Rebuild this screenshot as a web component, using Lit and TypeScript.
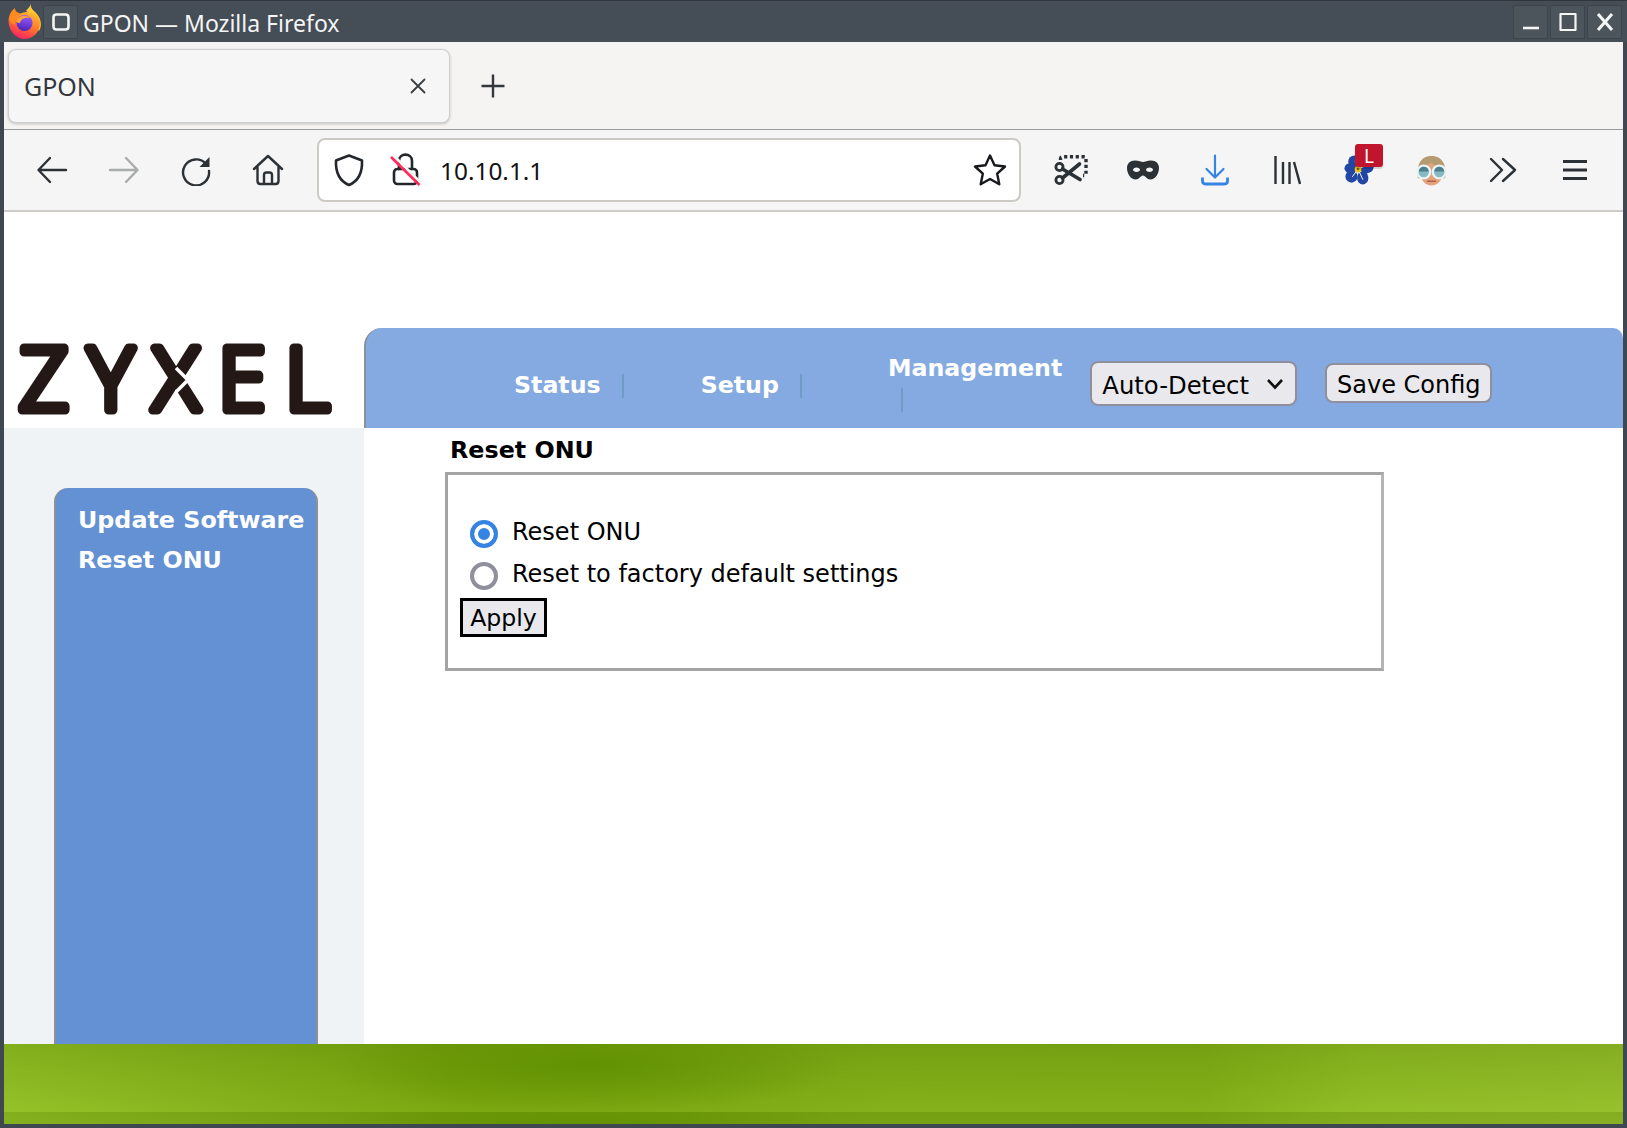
import { LitElement, html, css, svg } from "lit";
import { customElement } from "lit/decorators.js";

const ico = (w: number, h: number, vb: string, body: unknown) =>
  html`<svg width=${w} height=${h} viewBox=${vb} fill="none" stroke-linecap="round" stroke-linejoin="round">${body}</svg>`;

const firefox = ico(36, 36, "0 0 36 36", svg`
  <defs>
    <linearGradient id="ffa" x1="0.75" y1="0" x2="0.25" y2="1"><stop offset="0" stop-color="#ffbd2e"/><stop offset=".45" stop-color="#ff7a2a"/><stop offset=".8" stop-color="#ff3b50"/><stop offset="1" stop-color="#f0157c"/></linearGradient>
    <linearGradient id="ffb" x1="0.6" y1="0" x2="0.4" y2="1"><stop offset="0" stop-color="#9b5cff"/><stop offset="1" stop-color="#4a25b8"/></linearGradient>
  </defs>
  <path d="M25 0C24 6 30 7 33 13C36 19 35 24 33 27L24 17C26 13 23 8 20 7C21 5 24 3 25 0Z" fill="#ffc93a"/>
  <path d="M2.5 15C2 27 10 35 18.5 35C27 35 34 28 34 19C34 15 30 9 27 8C30 14 27 7 20 8C13 9 8 13 7 15C5 14 3 13 2.5 15Z" fill="url(#ffa)"/>
  <path d="M3 13C4 9 6 6 9 4C9 7 11 9 15 9C11 11 9 15 9 20C6 21 4 18 3 13Z" fill="#ff8a1f"/>
  <circle cx="18.5" cy="19" r="8" fill="url(#ffb)"/>
  <path d="M10 17C12 12 19 10 25 14C20 13 15 14 14 19C12 19 10 18 10 17Z" fill="#ffa230"/>
`);
const winMenu = ico(20, 20, "0 0 20 20", svg`<path d="M5.5 2.5H14.5Q17.5 2.5 17.5 5.5V14.5Q17.5 17.5 14.5 17.5H5.5Q2.5 17.5 2.5 14.5V5.5Q2.5 2.5 5.5 2.5Z" stroke="#f4f5f5" stroke-width="2.6"/>`);
const winMin = ico(16, 16, "0 0 16 16", svg`<path d="M0 14H16" stroke="#f4f5f5" stroke-width="2.6" stroke-linecap="butt"/>`);
const winMax = ico(18, 20, "0 0 18 20", svg`<rect x="1.5" y="2" width="15" height="16" stroke="#f4f5f5" stroke-width="2.2"/>`);
const winClose = ico(20, 20, "0 0 20 20", svg`<path d="M3 2L17 18M17 2L3 18" stroke="#f4f5f5" stroke-width="3" stroke-linecap="butt"/>`);
const tabX = ico(18, 18, "0 0 18 18", svg`<path d="M2.5 2.5L15.5 15.5M15.5 2.5L2.5 15.5" stroke="#3a3d42" stroke-width="1.8"/>`);
const plus = ico(26, 26, "0 0 26 26", svg`<path d="M13 1.5V24.5M1.5 13H24.5" stroke="#33373c" stroke-width="2.4" stroke-linecap="butt"/>`);
const back = ico(32, 30, "0 0 32 30", svg`<path d="M30 15H3M14 3L2.5 15L14 27" stroke="#2c3136" stroke-width="2.4"/>`);
const forward = ico(32, 30, "0 0 32 30", svg`<path d="M2 15H29M18 3L29.5 15L18 27" stroke="#a9abad" stroke-width="2.4"/>`);
const reload = ico(32, 32, "0 0 32 32", svg`<path d="M26 10A13 13 0 1 0 29 17" stroke="#2c3136" stroke-width="2.4"/><path d="M29.5 3V13H19.5Z" fill="#2c3136"/>`);
const home = ico(32, 32, "0 0 32 32", svg`<path d="M2 15L16 2L30 15M5.5 13V27Q5.5 30 8.5 30H23.5Q26.5 30 26.5 27V13M12 30V21Q12 18.5 14.5 18.5H17.5Q20 18.5 20 21V30" stroke="#2c3136" stroke-width="2.4"/>`);
const shield = ico(34, 34, "0 0 34 34", svg`<path d="M17 2.5L30 7.5C30.5 19 26.5 28 17 32C7.5 28 3.5 19 4 7.5Z" stroke="#23272b" stroke-width="2.6"/>`);
const lock = ico(34, 36, "0 0 34 36", svg`
  <path d="M11 17V9C11 0.5 24 0.5 24 9V17" stroke="#23272b" stroke-width="2.6"/>
  <rect x="6" y="17" width="23" height="15" rx="3.5" stroke="#23272b" stroke-width="2.6"/>
  <path d="M5 3L34 32" stroke="#f5f5f5" stroke-width="3" stroke-linecap="butt"/>
  <path d="M3 5L31.5 33" stroke="#ff2a5c" stroke-width="2.6" stroke-linecap="butt"/>`);
const star = ico(34, 34, "0 0 34 34", svg`<path d="M17 2.5L21.5 12.2L32 13.5L24.2 20.7L26.3 31.3L17 26L7.7 31.3L9.8 20.7L2 13.5L12.5 12.2Z" stroke="#17191c" stroke-width="2.4"/>`);
const scissors = ico(34, 30, "0 0 34 30", svg`
  <path d="M6.5 5V3.5Q6.5 1.8 8.2 1.8H30.5Q32 1.8 32 3.5V19Q32 20.5 30.5 20.5H29" stroke="#2c3136" stroke-width="3.4" stroke-dasharray="3.2 2.6" stroke-linecap="butt"/>
  <circle cx="5.5" cy="12" r="3.6" stroke="#2c3136" stroke-width="2.8"/><circle cx="5.5" cy="25" r="3.6" stroke="#2c3136" stroke-width="2.8"/>
  <path d="M8.5 14L26 24.5M8.5 23L25.5 9" stroke="#2c3136" stroke-width="3.6"/>`);
const mask = ico(34, 20, "0 0 34 20", svg`
  <path fill-rule="evenodd" d="M9 0.5C13 0.5 15 2 17 2C19 2 21 0.5 25 0.5C30 0.5 33 3.5 33 8C33 14 29 19.5 24.5 19.5C20.5 19.5 19.5 15.5 17 15.5C14.5 15.5 13.5 19.5 9.5 19.5C5 19.5 1 14 1 8C1 3.5 4 0.5 9 0.5ZM10.5 7.5C8.5 7.5 7 8.5 7 9.8C7 11 8.5 12 10.5 12C12.5 12 14 11 14 9.8C14 8.5 12.5 7.5 10.5 7.5ZM23.5 7.5C21.5 7.5 20 8.5 20 9.8C20 11 21.5 12 23.5 12C25.5 12 27 11 27 9.8C27 8.5 25.5 7.5 23.5 7.5Z" fill="#2c3136"/>`);
const download = ico(28, 32, "0 0 28 32", svg`<path d="M14 1.5V23M5.5 15L14 23.5L22.5 15" stroke="#3584e4" stroke-width="2.2"/><path d="M1.5 23.5V27Q1.5 30 4.5 30H23.5Q26.5 30 26.5 27V23.5" stroke="#3584e4" stroke-width="2.8" stroke-linecap="butt"/>`);
const library = ico(28, 30, "0 0 28 30", svg`<path d="M2.5 1V29M10 7V29M16.5 7V29M21 7L27 29" stroke="#2c3136" stroke-width="2.4" stroke-linecap="butt"/>`);
const flower = ico(30, 30, "0 0 32 32", svg`
  <g fill="#2146a3"><ellipse cx="11" cy="7" rx="6.5" ry="6.5"/><ellipse cx="24" cy="13" rx="7.5" ry="6.5"/><ellipse cx="20" cy="24.5" rx="6" ry="7"/><ellipse cx="8" cy="23" rx="6.5" ry="6.5"/><ellipse cx="7" cy="14" rx="6.5" ry="5.5"/></g>
  <path d="M15 15L12 7M15 15L24 11M15 15L20 26M15 15L9 23" stroke="#fff" stroke-width="1"/>
  <circle cx="15" cy="15" r="3.6" fill="#efc00f"/><circle cx="15" cy="15" r="1.3" fill="#6c5a00"/>`);
const avatar = ico(33, 31, "0 0 34 32", svg`
  <path d="M3 24C1 12 5 1 17 1C29 1 33 12 31 24Z" fill="#b59a72"/>
  <path d="M5 17C10 13 13 9 17 8C21 11 25 14 29 17C29 26 23 31.5 17 31.5C11 31.5 5 26 5 17Z" fill="#e3a27c"/>
  <circle cx="9" cy="17.5" r="6.6" fill="#86b9c4" stroke="#eaf4f5" stroke-width="2.4"/><circle cx="25" cy="17.5" r="6.6" fill="#86b9c4" stroke="#eaf4f5" stroke-width="2.4"/>
  <path d="M4 17A5 5 0 0 1 14 17ZM20 17A5 5 0 0 1 30 17Z" fill="#4d7f8c"/>
  <path d="M13 27H21" stroke="#b5614a" stroke-width="1.6"/>`);
const chevrons = ico(28, 26, "0 0 28 26", svg`<path d="M2 2L13 13L2 24M14 2L26 13L14 24" stroke="#2c3136" stroke-width="2.4"/>`);
const menu = ico(26, 22, "0 0 26 22", svg`<path d="M1 2.5H25M1 11H25M1 19.5H25" stroke="#2c3136" stroke-width="2.8" stroke-linecap="butt"/>`);

@customElement("app-root")
export class AppRoot extends LitElement {
  static styles = css`
    :host { display: flex; flex-direction: column; width: 1627px; height: 1128px; box-sizing: border-box; background: #3f4850; padding: 0 4px 4px; overflow: hidden; font-family: "DejaVu Sans", sans-serif; }
    .titlebar { height: 42px; margin: 0 -4px; background: #454d56; border-top: 1px solid #2f353b; box-sizing: border-box; display: flex; align-items: center; padding: 0 5px 0 6px; color: #f4f5f5; font: 400 23px "Noto Sans", sans-serif; }
    .ffx { width: 36px; height: 36px; margin-right: 1px; }
    .wbtn { width: 35px; height: 34px; box-sizing: border-box; display: flex; align-items: center; justify-content: center; background: #4c555c; border: 1px solid #3c444c; border-radius: 2px; }
    .title { margin-left: 5px; flex: 1; white-space: nowrap; padding-top: 2px; }
    .wbtns { display: flex; gap: 2px; }
    .tabbar { height: 88px; box-sizing: border-box; background: #f5f4f3; border-bottom: 1px solid #98999b; display: flex; align-items: center; padding: 1px 0 0 4px; }
    .tab { width: 442px; height: 74px; box-sizing: border-box; background: #f6f6f6; border: 1px solid #cfcfcf; border-radius: 8px; box-shadow: 0 1px 3px rgba(0,0,0,.22); display: flex; align-items: center; justify-content: space-between; padding: 0 22px 0 15px; color: #33373c; font: 400 25px "Noto Sans", sans-serif; }
    .newtab { margin-left: 30px; display: flex; }
    .navbar { height: 82px; box-sizing: border-box; background: #f5f5f5; border-bottom: 2px solid #cfcbc6; display: flex; align-items: center; padding: 0 12px; }
    .slot { width: 72px; flex: none; display: flex; align-items: center; justify-content: center; position: relative; }
    .url { flex: 1; height: 64px; box-sizing: border-box; margin: 0 14px 0 13px; background: #fff; border: 2px solid #cdc9c4; border-radius: 8px; display: flex; align-items: center; padding: 0 12px 0 13px; font: 400 24.4px "Noto Sans", sans-serif; color: #111; }
    .lock { margin-left: 22px; display: flex; }
    .addr { margin-left: 18px; flex: 1; }
    .badge { position: absolute; left: 32px; top: -11px; width: 28px; height: 23px; border-radius: 3px; background: #c0152c; color: #fff; font: 400 19px "Noto Sans", sans-serif; display: flex; align-items: center; justify-content: center; box-shadow: 0 2px 1px rgba(0,0,0,.15); }
    .page { flex: 1; min-height: 0; background: #fff; display: grid; grid-template-columns: 360px 1fr; grid-template-rows: 216px 1fr; }
    .logo { display: flex; align-items: flex-end; }
    .logo svg { display: block; overflow: visible; }
    .logo-t { font-family: "Open Sans", sans-serif; font-weight: 300; font-size: 86px; fill: #231815; stroke: #231815; stroke-width: 9px; stroke-linejoin: round; }
    .logo-g { stroke: #fff; stroke-width: 3.5px; fill: none; }
    .hdr { margin-top: 116px; background: #84aae1; border-left: 2px solid #8a8f98; border-radius: 18px 10px 0 0; display: flex; box-sizing: border-box; height: 100px; color: #fff; font-weight: 700; font-size: 23.7px; }
    .nav-i { display: flex; }
    .nav-status { margin-left: 148px; padding-top: 43px; }
    .nav-setup { margin-left: 77px; padding-top: 43px; }
    .nav-mgmt { margin-left: 86px; padding-top: 26px; display: block; }
    .sep { display: inline-block; width: 2px; height: 24px; background: #6e9cc4; }
    .nav-status .sep, .nav-setup .sep { margin: 3px 0 0 21px; }
    .nav-mgmt .sep { display: block; margin: 6px 0 0 13px; }
    select, .save { color: #000; background: #e9e9ed; border: 2px solid #8f8f9d; border-radius: 8px; box-sizing: border-box; margin: 0; }
    .sel { position: relative; margin: 33px 0 0 28px; height: 45px; }
    select { appearance: none; -webkit-appearance: none; font: 400 24.3px "DejaVu Sans", sans-serif; width: 207px; height: 45px; display: block; padding: 3px 0 0 10px; outline: none; }
    .chev { position: absolute; right: 13px; top: 17px; display: block; }
    .save { width: 167px; height: 40px; margin: 35px 0 0 28px; padding: 4px 0 0; font: 400 24px "DejaVu Sans", sans-serif; }
    .side { background: #eff3f6; padding: 60px 46px 0 50px; display: flex; }
    .menu { flex: 1; background: #6391d3; border: solid #8a8f98; border-width: 0 2px; border-radius: 14px 14px 0 0; padding: 12px 0 0 22px; color: #fff; font-weight: 700; font-size: 23.8px; line-height: 40px; white-space: nowrap; }
    .main { padding: 0 0 0 81px; }
    h1 { font-size: 23.8px; font-weight: 700; margin: 8px 0 8px 5px; color: #000; line-height: 28px; }
    .box { width: 939px; height: 199px; box-sizing: border-box; border: 3px solid #a4a4a4; border-right-color: #b4b4b4; padding: 38px 0 0 12px; font-size: 24px; color: #000; }
    .row { display: flex; align-items: flex-start; height: 42px; padding-left: 10px; gap: 14px; line-height: 38px; white-space: nowrap; }
    .row input { appearance: none; -webkit-appearance: none; width: 28px; height: 28px; margin: 7px 0 0; box-sizing: border-box; border: 4px solid #8f8f9d; border-radius: 50%; background: #fff; flex: none; }
    .row input:checked { border-color: #3584e4; box-shadow: inset 0 0 0 4px #fff; background: #3584e4; }
    .apply { display: block; width: 87px; height: 39px; margin-top: 1px; padding: 1px 0 0; box-sizing: border-box; background: #e9e9ed; border: 3px solid #000; font: 400 23.6px "DejaVu Sans", sans-serif; color: #000; }
    .footer { height: 80px; flex: none; background-size: 100% 68px; background-repeat: repeat-y; background-image:
      radial-gradient(ellipse 260px 50px at 36% 30%, rgba(96,144,0,.9), rgba(96,144,0,0)),
      linear-gradient(180deg, rgba(110,150,15,.45), rgba(150,195,40,.35)),
      linear-gradient(90deg, #93c228 0, #7fad18 14%, #6d9b04 28%, #72a00c 42%, #7ba914 55%, #7aa712 74%, #90bc26 84%, #98c030 100%); }
  `;

  render() {
    return html`
      <div class="titlebar">
        <div class="ffx">${firefox}</div>
        <div class="wbtn">${winMenu}</div>
        <div class="title">GPON — Mozilla Firefox</div>
        <div class="wbtns">
          <div class="wbtn">${winMin}</div>
          <div class="wbtn">${winMax}</div>
          <div class="wbtn">${winClose}</div>
        </div>
      </div>
      <div class="tabbar">
        <div class="tab"><span>GPON</span>${tabX}</div>
        <div class="newtab">${plus}</div>
      </div>
      <div class="navbar">
        <div class="slot">${back}</div>
        <div class="slot">${forward}</div>
        <div class="slot">${reload}</div>
        <div class="slot">${home}</div>
        <div class="url">
          ${shield}
          <span class="lock">${lock}</span>
          <span class="addr">10.10.1.1</span>
          ${star}
        </div>
        <div class="slot">${scissors}</div>
        <div class="slot">${mask}</div>
        <div class="slot">${download}</div>
        <div class="slot">${library}</div>
        <div class="slot">${flower}<span class="badge">L</span></div>
        <div class="slot">${avatar}</div>
        <div class="slot">${chevrons}</div>
        <div class="slot">${menu}</div>
      </div>
      <div class="page">
        <div class="logo">
          <svg width="356" height="140" viewBox="0 -40 356 140">
            <text class="logo-t" y="81.5" letter-spacing="19.4" x="15">ZYXEL</text>
            <path class="logo-g" d="M172 40L184 52L172 64" />
          </svg>
        </div>
        <div class="hdr">
          <div class="nav-i nav-status">Status<span class="sep"></span></div>
          <div class="nav-i nav-setup">Setup<span class="sep"></span></div>
          <div class="nav-i nav-mgmt">Management<span class="sep"></span></div>
          <div class="sel">
            <select><option>Auto-Detect</option></select>
            <svg class="chev" width="18" height="12" viewBox="0 0 18 12" fill="none"><path d="M2 2L9 9.5L16 2" stroke="#111" stroke-width="2.6"/></svg>
          </div>
          <button class="save">Save Config</button>
        </div>
        <div class="side">
          <div class="menu">Update Software<br />Reset ONU</div>
        </div>
        <div class="main">
          <h1>Reset ONU</h1>
          <div class="box">
            <label class="row"><input type="radio" name="r" checked /><span>Reset ONU</span></label>
            <label class="row"><input type="radio" name="r" /><span>Reset to factory default settings</span></label>
            <button class="apply">Apply</button>
          </div>
        </div>
      </div>
      <div class="footer"></div>
    `;
  }
}
